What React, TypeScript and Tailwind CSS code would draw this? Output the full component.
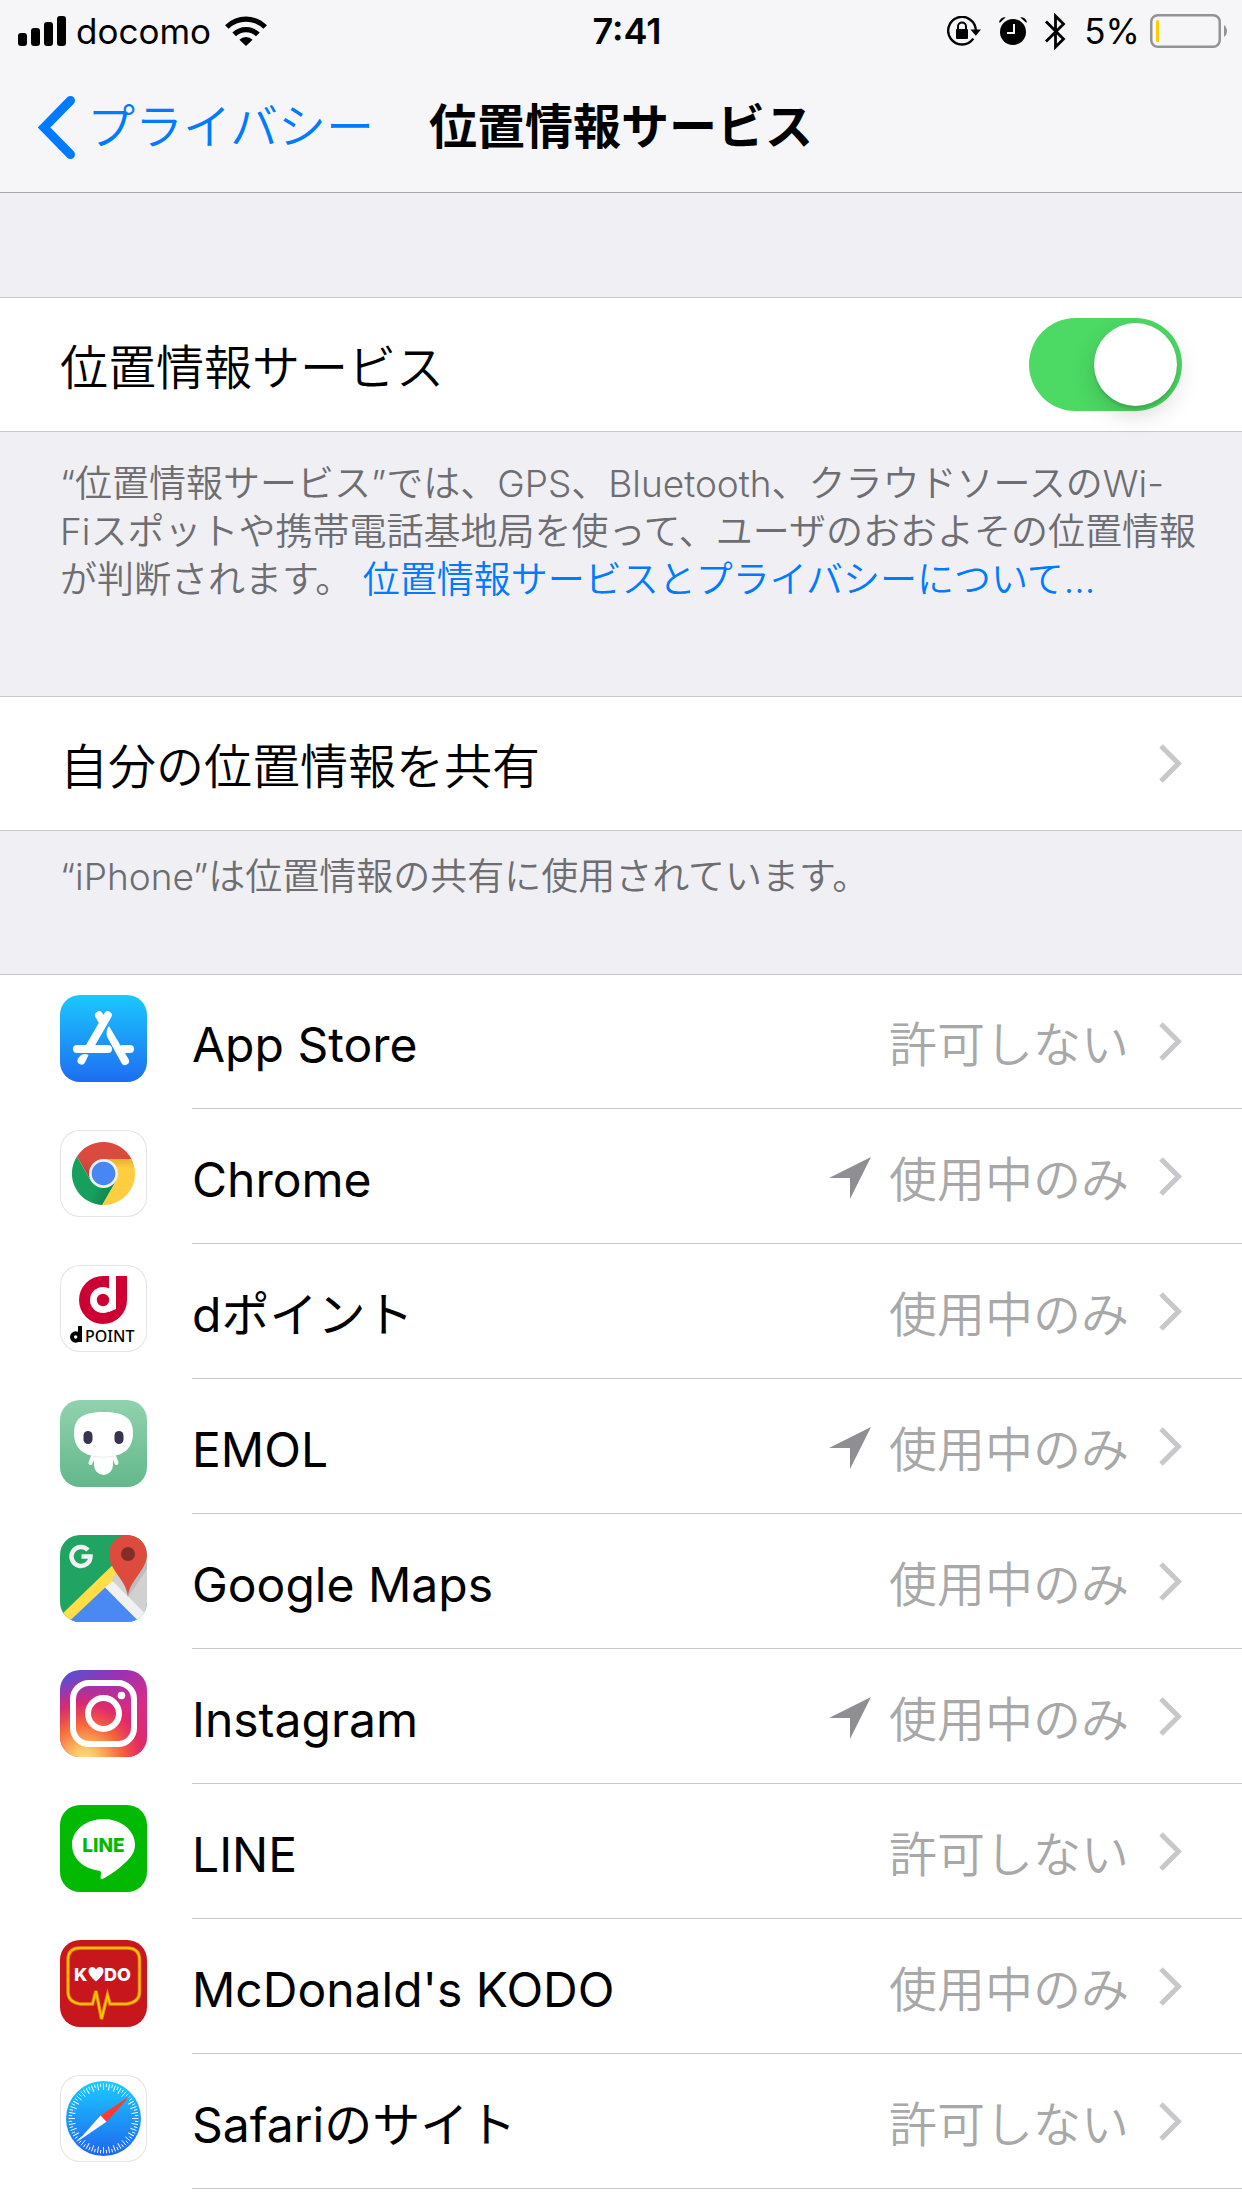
import { useState } from "react";

const hairline = "border-[#c8c7cc]";

function SignalIcon() {
  return (
    <svg width="48" height="30" viewBox="0 0 48 30" aria-hidden>
      <rect x="0" y="17" width="9" height="13" rx="3" />
      <rect x="13" y="12" width="9" height="18" rx="3" />
      <rect x="26" y="6" width="9" height="24" rx="3" />
      <rect x="39" y="0" width="9" height="30" rx="3" />
    </svg>
  );
}

function WifiIcon() {
  return (
    <svg width="42" height="30" viewBox="0 0 42 30" aria-hidden>
      <path d="M0 9.2a30 30 0 0 1 42 0l-3.6 3.6a25 25 0 0 0-34.8 0z" />
      <path d="M7.3 16.6a19.6 19.6 0 0 1 27.4 0l-3.7 3.7a14.4 14.4 0 0 0-20 0z" />
      <path d="M14.4 23.7a9.4 9.4 0 0 1 13.2 0L21 30z" />
    </svg>
  );
}

function RotationLockIcon() {
  return (
    <svg width="34" height="30" viewBox="0 0 34 30" aria-hidden>
      <path
        d="M26.3 22.6A13.8 13.8 0 1 1 28.8 14.5"
        fill="none"
        stroke="#000"
        strokeWidth="2.4"
      />
      <path d="M23.5 13.6H34l-5.2 6.2z" />
      <rect x="9" y="13" width="12" height="10" rx="1" />
      <path d="M11 14v-3.4a4 4 0 0 1 8 0V14" fill="none" stroke="#000" strokeWidth="2" />
    </svg>
  );
}

function AlarmIcon() {
  return (
    <svg width="28" height="30" viewBox="0 0 28 30" aria-hidden>
      <circle cx="14" cy="16" r="13" />
      <path d="M0 6.5A6 6 0 0 1 6.8 1.2L1.2 6.5zM28 6.5a6 6 0 0 0-6.8-5.3l5.6 5.3z" />
      <path d="M15 8v9H8" fill="none" stroke="#f6f6f8" strokeWidth="2" />
    </svg>
  );
}

function BluetoothIcon() {
  return (
    <svg width="21" height="37" viewBox="0 0 21 37" aria-hidden>
      <path
        d="M1 8.5 18.5 26l-8 8V3l8 8L1 28.5"
        fill="none"
        stroke="#000"
        strokeWidth="2.8"
      />
    </svg>
  );
}

function BatteryIcon() {
  return (
    <svg width="78" height="34" viewBox="0 0 78 34" aria-hidden>
      <rect x="1.25" y="1.25" width="68.5" height="31.5" rx="6.5" fill="none" stroke="#939395" strokeWidth="2.5" />
      <rect x="6" y="6" width="3" height="22" rx="1.5" fill="#fc0" />
      <path d="M74 11a7.5 7.5 0 0 1 0 12z" fill="#939395" />
    </svg>
  );
}

function BackIcon() {
  return (
    <svg width="37" height="63" viewBox="0 0 37 63" aria-hidden>
      <path d="M32.5 4.5 6 31.5l26.5 27" fill="none" stroke="#007aff" strokeWidth="9" strokeLinecap="round" />
    </svg>
  );
}

function Chevron() {
  return (
    <svg width="23" height="39" viewBox="0 0 23 39" className="shrink-0" aria-hidden>
      <path d="M2 2 19.5 19.5 2 37" fill="none" stroke="#c7c7cc" strokeWidth="5" />
    </svg>
  );
}

function LocationArrow() {
  return (
    <svg width="42" height="42" viewBox="0 0 42 42" className="mt-1" aria-label="位置情報を使用" role="img">
      <path d="M42 0 0 21h21v21z" fill="#8e8e93" />
    </svg>
  );
}

function AppStoreLogo() {
  return (
    <svg viewBox="0 0 87 87" aria-hidden>
      <defs>
        <linearGradient id="store" x1="0" y1="0" x2="0" y2="1">
          <stop offset="0" stopColor="#1bc8fd" />
          <stop offset="1" stopColor="#1d6df2" />
        </linearGradient>
      </defs>
      <rect width="87" height="87" fill="url(#store)" />
      <g stroke="#fff" strokeWidth="8" strokeLinecap="round" fill="none">
        <path d="M47.8 20.3 29.5 52" />
        <path d="M39 20.3 42 25.5" />
        <path d="M17 54H48" />
        <path d="M63 54h7" />
      </g>
      <path d="M49 31 68.5 64a4 4 0 0 1-7 4L47.2 42q-2-6 1.8-11z" fill="#fff" />
      <path d="M21 60q4-2 7.5 0L25 67.5a4 4 0 0 1-7-4z" fill="#fff" />
    </svg>
  );
}

function ChromeLogo() {
  return (
    <svg viewBox="0 0 87 87" aria-hidden>
      <defs>
        <linearGradient id="chromeRed" x1="0" y1="1" x2="0.5" y2="0">
          <stop offset="0" stopColor="#b03a30" />
          <stop offset="0.5" stopColor="#db4a3e" />
        </linearGradient>
        <linearGradient id="chromeYellow" x1="0" y1="0" x2="0" y2="1">
          <stop offset="0" stopColor="#e3b033" />
          <stop offset="0.2" stopColor="#ffcd40" />
        </linearGradient>
        <linearGradient id="chromeGreen" x1="1" y1="0.7" x2="0.6" y2="0.5">
          <stop offset="0" stopColor="#0d8043" />
          <stop offset="1" stopColor="#17a05d" />
        </linearGradient>
      </defs>
      <path d="M16.9 26.5A31.5 31.5 0 0 1 71.5 29H43.5L30.9 50.8z" fill="url(#chromeRed)" />
      <path d="M71.5 29A31.5 31.5 0 0 1 42.1 75L56 50.8 43.5 29z" fill="url(#chromeYellow)" />
      <path d="M42.1 75A31.5 31.5 0 0 1 16.9 26.5L30.9 50.8H56z" fill="url(#chromeGreen)" />
      <circle cx="43.5" cy="43.5" r="14.5" fill="#f1f1f1" />
      <circle cx="43.5" cy="43.5" r="11.8" fill="#4787f3" />
    </svg>
  );
}

function DPointLogo() {
  return (
    <svg viewBox="0 0 87 87" aria-hidden>
      <path d="M43 11H67V35A24 24 0 1 1 43 11z" fill="#cc0033" />
      <circle cx="43" cy="35" r="13" fill="#fff" />
      <path d="M49 10h7v34l-7 3z" fill="#fff" />
      <circle cx="43" cy="35" r="6.2" fill="#cc0033" />
      <circle cx="15.7" cy="72" r="3.7" fill="none" stroke="#000" strokeWidth="4" />
      <rect x="18" y="61" width="4" height="16" />
      <text x="25" y="77" fontSize="16" fontWeight="500" className="font-['Noto_Sans']">
        POINT
      </text>
    </svg>
  );
}

function EmolLogo() {
  return (
    <svg viewBox="0 0 87 87" aria-hidden>
      <defs>
        <linearGradient id="emol" x1="0" y1="0" x2="0" y2="1">
          <stop offset="0" stopColor="#91d2ae" />
          <stop offset="1" stopColor="#63b88a" />
        </linearGradient>
      </defs>
      <rect width="87" height="87" fill="url(#emol)" />
      <path d="M33 56 30.5 63M54 56l2.5 7" stroke="#fff" strokeWidth="4" strokeLinecap="round" />
      <path d="M32 54h23l-3 12a9 9.5 0 0 1-17 0z" fill="#fff" />
      <ellipse cx="43.5" cy="65" rx="9.5" ry="10" fill="#fff" />
      <path d="M43.5 12C64 12 73 18 73 33S64 57 43.5 57 14 48 14 33s9-21 29.5-21z" fill="#fff" />
      <path d="M33 56.5q10.5 1.5 21 0" stroke="#e9eeec" fill="none" />
      <rect x="23.5" y="31" width="9" height="13" rx="4.5" fill="#3a3350" />
      <rect x="54.5" y="31" width="9" height="13" rx="4.5" fill="#3a3350" />
    </svg>
  );
}

function MapsLogo() {
  return (
    <svg viewBox="0 0 87 87" aria-hidden>
      <rect width="87" height="87" fill="#1fa462" />
      <path d="M52 42 87 8v79H60z" fill="#d1d1d1" />
      <path d="M68 62 87 34V20L60 36z" fill="#bdbdbd" />
      <path d="M44 51.5 79.5 87H8.5z" fill="#4a89f3" />
      <path d="M44 51.5 51 44.5 87 80.5V87H79.5z" fill="#f1f1f1" />
      <path d="M-3 84 60 23l8 8L8.5 87H-3z" fill="#ffde48" />
      <path d="M52 43.5 68 28l8 10-18 11.5z" fill="#d1d1d1" />
      <path d="M68 62c-1-17-19-26-19-43a19 19 0 0 1 38 0c0 17-18 26-19 43z" fill="#dd4b3e" />
      <circle cx="68" cy="19" r="7" fill="#822d28" />
      <path
        d="M28 15A9.5 9.5 0 1 0 30.5 21.5H21.5"
        stroke="#f1f1f1"
        strokeWidth="4.5"
        fill="none"
      />
    </svg>
  );
}

function InstagramLogo() {
  return (
    <svg viewBox="0 0 87 87" aria-hidden>
      <defs>
        <linearGradient id="igBase" x1="0" y1="0" x2="0.7" y2="1">
          <stop offset="0" stopColor="#4c56d6" />
          <stop offset="0.35" stopColor="#9a31b5" />
          <stop offset="0.7" stopColor="#d92b86" />
          <stop offset="1" stopColor="#e22b6e" />
        </linearGradient>
        <radialGradient id="igWarm" cx="0.28" cy="1.05" r="0.95">
          <stop offset="0" stopColor="#ffe185" />
          <stop offset="0.15" stopColor="#fdc765" />
          <stop offset="0.45" stopColor="#f8663a" />
          <stop offset="0.7" stopColor="#e22a64" stopOpacity="0.85" />
          <stop offset="1" stopColor="#c52c90" stopOpacity="0" />
        </radialGradient>
      </defs>
      <rect width="87" height="87" fill="url(#igBase)" />
      <rect width="87" height="87" fill="url(#igWarm)" />
      <g fill="none" stroke="#fff" strokeWidth="6">
        <rect x="13" y="13" width="61" height="61" rx="16" />
        <circle cx="43.5" cy="43.5" r="15.5" />
      </g>
      <circle cx="61.5" cy="25.5" r="3.8" fill="#fff" />
    </svg>
  );
}

function LineLogo() {
  return (
    <svg viewBox="0 0 87 87" aria-hidden>
      <rect width="87" height="87" fill="#00b900" />
      <path
        d="M43.5 14C61 14 75 25.5 75 39.5c0 6-2.5 11-7.5 16C61 62 51 70 42.5 74c-3 1-1.5-3-1.5-6 0-1.5-1-2.5-3-2.5C23 63.5 12 53 12 39.5 12 25.5 26 14 43.5 14z"
        fill="#fff"
      />
      <text x="43.5" y="47" fontSize="19" fontWeight="800" textAnchor="middle" fill="#00b900" className="font-['Inter']">
        LINE
      </text>
    </svg>
  );
}

function KodoLogo() {
  const frame =
    "M31.5 64H20Q8 62 8 52V20Q8 8 20 8H67Q79.5 8 79.5 20V52Q79.5 62 67 64H50L47.5 55 41.5 79 36 51 32.5 64z";
  return (
    <svg viewBox="0 0 87 87" aria-hidden>
      <rect width="87" height="87" fill="#c8161d" />
      <path d={frame} fill="none" stroke="#e98412" strokeWidth="3.5" />
      <path d={frame} fill="none" stroke="#ffd000" strokeWidth="1.5" />
      <g fill="#fff" fontSize="18" fontWeight="800" className="font-['Inter']">
        <text x="14" y="41">K</text>
        <text x="44" y="41">DO</text>
      </g>
      <path d="M36 41.5C31 37 28.5 34 28.5 31c0-4.5 5.5-5.5 7.5-1.5 2-4 7.5-3 7.5 1.5 0 3-2.5 6-7.5 10.5z" fill="#fff" />
    </svg>
  );
}

function SafariLogo() {
  const ticks = Array.from({ length: 72 }, (_, i) => i);
  return (
    <svg viewBox="0 0 87 87" aria-hidden>
      <defs>
        <linearGradient id="safari" x1="0" y1="0" x2="0" y2="1">
          <stop offset="0" stopColor="#1bcbfd" />
          <stop offset="1" stopColor="#1e66f0" />
        </linearGradient>
      </defs>
      <circle cx="43.5" cy="43.5" r="37.5" fill="url(#safari)" />
      {ticks.map((i) => (
        <line
          key={i}
          x1="43.5"
          x2="43.5"
          y1="8.5"
          y2={i % 2 ? 12 : 15}
          stroke="#fff"
          strokeWidth="0.9"
          transform={`rotate(${i * 5} 43.5 43.5)`}
        />
      ))}
      <path d="M70.5 20.5 40.5 40.5 46.5 46.8z" fill="#ff3b30" />
      <path d="M17.5 66.5 40.5 40.5 46.5 46.8z" fill="#fff" />
    </svg>
  );
}

const never = "許可しない";
const whileUsing = "使用中のみ";

const apps = [
  { name: "App Store", access: never, logo: AppStoreLogo },
  { name: "Chrome", access: whileUsing, recent: true, logo: ChromeLogo, outlined: true },
  { name: "dポイント", access: whileUsing, logo: DPointLogo, outlined: true },
  { name: "EMOL", access: whileUsing, recent: true, logo: EmolLogo },
  { name: "Google Maps", access: whileUsing, logo: MapsLogo },
  { name: "Instagram", access: whileUsing, recent: true, logo: InstagramLogo },
  { name: "LINE", access: never, logo: LineLogo },
  { name: "McDonald's KODO", access: whileUsing, logo: KodoLogo },
  { name: "Safariのサイト", access: never, logo: SafariLogo, outlined: true },
];

function StatusBar() {
  return (
    <div className="grid h-[62px] grid-cols-[1fr_auto_1fr] items-center pr-[14px] pl-[18px] text-[35px] leading-[60px] font-normal">
      <div className="flex items-center gap-[10px]">
        <SignalIcon />
        <span>docomo</span>
        <span className="ml-1">
          <WifiIcon />
        </span>
      </div>
      <span className="pl-2 text-[36px] font-semibold">7:41</span>
      <div className="flex items-center justify-end gap-[18px]">
        <RotationLockIcon />
        <AlarmIcon />
        <BluetoothIcon />
        <div className="flex items-center gap-[10px]">
          <span>5%</span>
          <BatteryIcon />
        </div>
      </div>
    </div>
  );
}

function AppRow({ app }: { app: (typeof apps)[number] }) {
  const Logo = app.logo;
  return (
    <li className="first:-mt-px">
      <a href="#" className="flex h-[135px] items-center gap-[45px] pl-[60px]">
        <span
          className={`mb-1.5 size-[87px] shrink-0 overflow-hidden rounded-[20px] ${
            app.outlined ? "ring-1 ring-[#e4e4e5] ring-inset" : ""
          }`}
        >
          <Logo />
        </span>
        <span className={`flex h-full flex-1 items-center border-b pr-[60px] ${hairline}`}>
          <span className="flex-1 pt-2 font-normal">{app.name}</span>
          {app.recent && <LocationArrow />}
          <span className="pt-2 pr-[30px] pl-[18px] text-[#a8a8a8]">{app.access}</span>
          <Chevron />
        </span>
      </a>
    </li>
  );
}

export default function App() {
  const [enabled, setEnabled] = useState(true);

  return (
    <div className="flex min-h-screen flex-col bg-[#efeff4] font-['Inter','Noto_Sans_CJK_JP',sans-serif] text-[48px] leading-[72px] font-[350] text-black">
      <header className="border-b border-[#a7a7aa] bg-[#f6f6f8]">
        <StatusBar />
        <nav className="grid h-[130px] grid-cols-[1fr_auto_1fr] items-center px-[38px]">
          <a href="#" className="flex items-center gap-3 text-[#007aff]">
            <BackIcon />
            プライバシー
          </a>
          <h1 className="font-semibold">位置情報サービス</h1>
        </nav>
      </header>

      <main className="flex flex-1 flex-col">
        <section className="mt-[104px]">
          <label className={`flex h-[135px] items-center justify-between border-y bg-white px-[60px] ${hairline}`}>
            <span className="pt-1.5">位置情報サービス</span>
            <input
              type="checkbox"
              role="switch"
              checked={enabled}
              onChange={(e) => setEnabled(e.target.checked)}
              className="h-[93px] w-[153px] cursor-pointer appearance-none rounded-full bg-[#e5e5ea] p-[5px] transition-colors before:block before:size-[83px] before:rounded-full before:bg-white before:shadow-[0_9px_24px_rgba(0,0,0,0.15),0_3px_3px_rgba(0,0,0,0.12)] before:transition-all checked:bg-[#4cd964] checked:before:ml-[60px]"
            />
          </label>
          <p className="pt-7 pr-9 pl-[60px] text-[37px] leading-[48px] text-[#6d6d72]">
            “位置情報サービス”では、GPS、Bluetooth、クラウドソースのWi-
            <br />
            Fiスポットや携帯電話基地局を使って、ユーザのおおよその位置情報が判断されます。{" "}
            <a href="#" className="text-[#007aff]">
              位置情報サービスとプライバシーについて...
            </a>
          </p>
        </section>

        <section className="mt-[92px]">
          <a href="#" className={`flex h-[135px] items-center justify-between border-y bg-white px-[60px] ${hairline}`}>
            <span className="pt-1.5">自分の位置情報を共有</span>
            <Chevron />
          </a>
          <p className="pt-[22px] pr-9 pl-[60px] text-[37px] leading-[48px] text-[#6d6d72]">
            “iPhone”は位置情報の共有に使用されています。
          </p>
        </section>

        <ul className={`mt-[73px] flex-1 border-t bg-white ${hairline}`}>
          {apps.map((app) => (
            <AppRow key={app.name} app={app} />
          ))}
        </ul>
      </main>
    </div>
  );
}
